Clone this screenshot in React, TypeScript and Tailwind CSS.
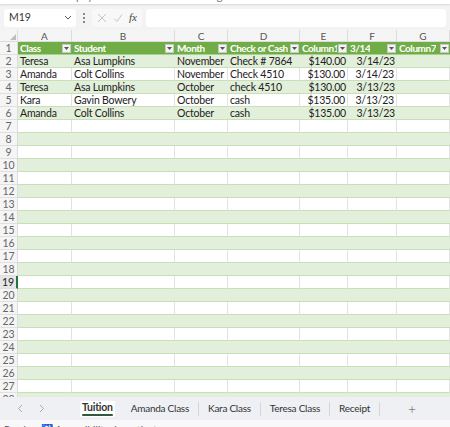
import React from 'react'

const font = { fontFamily: 'Lato, "Open Sans", sans-serif' }

const columns = ['A', 'B', 'C', 'D', 'E', 'F', 'G']
const headers = ['Class', 'Student', 'Month', 'Check or Cash', 'Column1', '3/14', 'Column7']
const rightAligned = [false, false, false, false, true, true, false]

const data: string[][] = [
  ['Teresa', 'Asa Lumpkins', 'November', 'Check # 7864', '$140.00', '3/14/23', ''],
  ['Amanda', 'Colt Collins', 'November', 'Check 4510', '$130.00', '3/14/23', ''],
  ['Teresa', 'Asa Lumpkins', 'October', 'check 4510', '$130.00', '3/13/23', ''],
  ['Kara', 'Gavin Bowery', 'October', 'cash', '$135.00', '3/13/23', ''],
  ['Amanda', 'Colt Collins', 'October', 'cash', '$135.00', '3/13/23', ''],
]

const tabs = ['Tuition', 'Amanda Class', 'Kara Class', 'Teresa Class', 'Receipt']

function FilterButton() {
  return (
    <span className="flex h-[9px] w-[9px] shrink-0 items-center justify-center border border-[#c8c8c8] bg-[#f4f4f4]">
      <svg width="5" height="3" viewBox="0 0 5 3">
        <path d="M0 0h5L2.5 3z" fill="#555" />
      </svg>
    </span>
  )
}

function Toolbar() {
  return (
    <div className="flex h-[30px] shrink-0 flex-col bg-[#f3f3f3]">
      <div className="h-[4px] overflow-hidden bg-white shadow-[0_1px_2px_rgba(0,0,0,0.12)]">
        <div className="-mt-[10px] pl-[40px] text-[11px] leading-[12px] text-[#777]">Tuition payments for the class in the grid</div>
      </div>
      <div className="flex flex-1 items-center gap-[4px] px-[4px] pt-[1px]">
        <div className="flex h-[18px] w-[72px] items-center justify-between rounded-[3px] bg-white pl-[5px] pr-[4px] text-[10.5px] text-[#333]">
          <span>M19</span>
          <svg width="8" height="5" viewBox="0 0 8 5">
            <path d="M1 1l3 3 3-3" fill="none" stroke="#555" strokeWidth="1" />
          </svg>
        </div>
        <div className="flex w-[8px] flex-col items-center gap-[2px]">
          <span className="h-[2px] w-[2px] rounded-full bg-[#666]" />
          <span className="h-[2px] w-[2px] rounded-full bg-[#666]" />
          <span className="h-[2px] w-[2px] rounded-full bg-[#666]" />
        </div>
        <div className="flex h-[18px] w-[50px] items-center justify-around rounded-[3px] bg-[#f8f8f8] px-[2px]">
          <svg width="10" height="10" viewBox="0 0 10 10">
            <path d="M1 1l8 8M9 1l-8 8" stroke="#c4c4c4" strokeWidth="1" />
          </svg>
          <svg width="10" height="10" viewBox="0 0 10 10">
            <path d="M1 5.5l3 3 5-7" fill="none" stroke="#c4c4c4" strokeWidth="1" />
          </svg>
          <span className="text-[11px] italic text-[#444]" style={{ fontFamily: '"Liberation Serif", serif' }}>
            fx
          </span>
        </div>
        <div className="h-[18px] flex-1 rounded-[3px] bg-white" />
      </div>
    </div>
  )
}

function Grid() {
  const rows = Array.from({ length: 28 }, (_, i) => i + 1)
  return (
    <div className="flex-1 overflow-hidden bg-white">
      <div className="grid grid-cols-[18px_54px_103px_53px_72px_48px_49px_53px] text-[10.5px] leading-[12px]">
        <div className="relative h-[12px] border-b border-r border-[#dcdcdc] bg-[#f5f5f5]">
          <svg className="absolute bottom-[1px] right-[1px]" width="6" height="6" viewBox="0 0 6 6">
            <path d="M6 0v6H0z" fill="#bdbdbd" />
          </svg>
        </div>
        {columns.map((c) => (
          <div key={c} className="h-[12px] border-b border-r border-[#dcdcdc] bg-[#f5f5f5] text-center text-[10px] text-[#555]">
            {c}
          </div>
        ))}

        {rows.map((r) => {
          const green = r % 2 === 0
          const selected = r === 19
          return (
            <React.Fragment key={r}>
              <div
                className={`h-[13px] border-b border-[#e0e0e0] text-center text-[10.5px] leading-[13px] ${
                  selected
                    ? 'border-r-2 border-r-[#217346] bg-[#e6e6e6] text-[#222]'
                    : 'border-r border-r-[#dcdcdc] bg-[#f5f5f5] text-[#666]'
                }`}
              >
                {r}
              </div>
              {r === 1
                ? headers.map((h) => (
                    <div
                      key={h}
                      className="flex h-[13px] items-center justify-between gap-[1px] border-b border-[#a9d08e] bg-[#70ad47] pl-[2px] pr-[1px] text-[10px] font-bold tracking-[-0.45px] text-white"
                    >
                      <span className="overflow-hidden whitespace-nowrap">{h}</span>
                      <FilterButton />
                    </div>
                  ))
                : columns.map((c, i) => {
                    const v = data[r - 2]?.[i] ?? ''
                    return (
                      <div
                        key={c}
                        className={`h-[13px] overflow-hidden whitespace-nowrap border-b px-[2px] leading-[12px] tracking-[-0.2px] text-[#222] ${
                          green ? 'border-[#c9dfba] bg-[#e2efda]' : 'border-[#c9dfba] border-r border-r-[#e2e2e2] bg-white'
                        } ${rightAligned[i] ? 'text-right' : ''}`}
                      >
                        {v}
                      </div>
                    )
                  })}
            </React.Fragment>
          )
        })}
      </div>
    </div>
  )
}

function Tabs() {
  return (
    <div className="flex h-[23px] shrink-0 items-center bg-[#eef0f3] text-[10px] tracking-[-0.25px] text-[#333]">
      <div className="flex w-[72px] items-center">
        <svg className="ml-[17px]" width="6" height="9" viewBox="0 0 6 9">
          <path d="M5 1L1.5 4.5 5 8" fill="none" stroke="#aaa" strokeWidth="1" />
        </svg>
        <svg className="ml-[16px]" width="6" height="9" viewBox="0 0 6 9">
          <path d="M1 1l3.5 3.5L1 8" fill="none" stroke="#aaa" strokeWidth="1" />
        </svg>
      </div>
      <div className="flex h-full items-center">
        {tabs.map((t, i) => (
          <React.Fragment key={t}>
            {i === 0 ? (
              <div className="ml-[8px] flex h-[16px] flex-col items-center justify-center rounded-[2px] bg-white px-[2px] pt-[1px]">
                <span className="text-[10.5px] font-bold leading-[11px]">{t}</span>
                <span className="mt-[1px] h-[2px] w-full rounded bg-[#2b5a3c]" />
              </div>
            ) : (
              <div className="flex h-full items-center px-[9px]">
                <span>{t}</span>
              </div>
            )}
            {i > 0 && <span className="h-[14px] w-px bg-[#d4d6da]" />}
            {i === 0 && <span className="w-[7px]" />}
          </React.Fragment>
        ))}
        <span className="ml-[28px] text-[14px] font-light text-[#555]">+</span>
      </div>
    </div>
  )
}

function StatusBar() {
  return (
    <div className="flex h-[7px] shrink-0 items-start gap-[10px] overflow-hidden bg-[#f8f8f8] pl-[4px] pt-[3px] text-[10px] leading-[12px] text-[#555]">
      <span>Ready</span>
      <span>♿ Accessibility: Investigate</span>
    </div>
  )
}

export default function App() {
  return (
    <div className="flex h-[427px] w-[450px] flex-col overflow-hidden bg-white" style={font}>
      <Toolbar />
      <Grid />
      <Tabs />
      <StatusBar />
    </div>
  )
}
